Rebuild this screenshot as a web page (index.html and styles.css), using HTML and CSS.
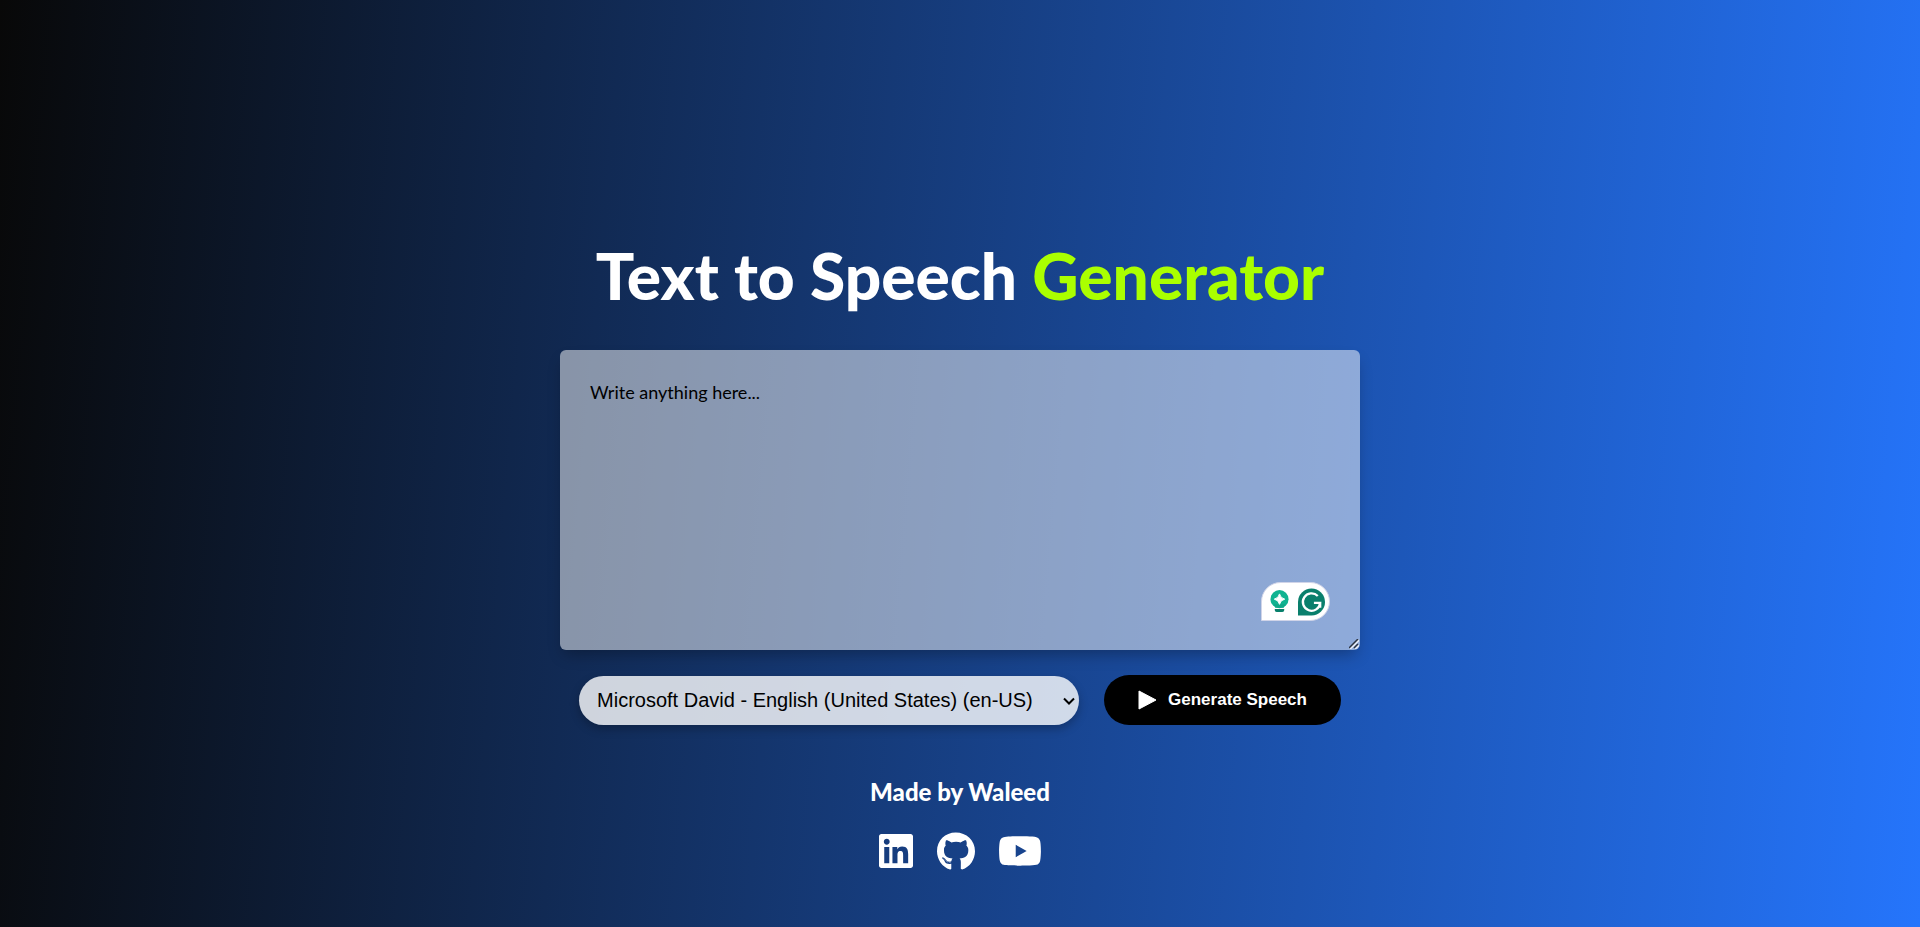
FILE: index.html
```html
<!DOCTYPE html>
<html lang="en">
<head>
<meta charset="utf-8">
<meta name="viewport" content="width=device-width, initial-scale=1">
<title>Text to Speech Generator</title>
<link rel="stylesheet" href="styles.css">
</head>
<body>
<main class="hero">
  <h1 class="title">Text to Speech <span class="accent">Generator</span></h1>
  <div class="editor">
    <textarea class="editor-text" aria-label="Text to speak" placeholder="Write anything here..."></textarea>
    <svg class="grip" viewBox="0 0 10 10" aria-hidden="true">
      <path d="M1 10l9-9M6 10l4-4" stroke="#e4ebf7" stroke-width="2"/>
      <path d="M0 9l9-9M5 9l4-4" stroke="#2c3442" stroke-width="1.500"/>
    </svg>
    <div class="assistant" aria-hidden="true">
      <svg class="bulb" viewBox="0 0 20 24">
        <circle cx="10" cy="9.500" r="9.500" fill="#0fb391"/>
        <path d="M4 15h12l-1.500 3.500H5.500z" fill="#0fa888"/>
        <path d="M10 4Q11 8.500 15.500 9.500 11 10.500 10 15 9 10.500 4.500 9.500 9 8.500 10 4z" fill="#fff" stroke="#fff" stroke-linejoin="round"/>
        <path d="M5 20h10v1q0 2-2 2H7q-2 0-2-2z" fill="#08806b"/>
      </svg>
      <svg class="badge-g" viewBox="0 0 28 28">
        <path d="M0 28V14A14 14 0 1 1 14 28z" fill="#0a7f6c"/>
        <path d="M20.500 7.800A9 9 0 1 0 23 15h-6.500M23 15v5" fill="none" stroke="#fff" stroke-width="2.400"/>
      </svg>
    </div>
  </div>
  <div class="controls">
    <div class="voice-field">
      <select class="voice" aria-label="Voice">
        <option>Microsoft David - English (United States) (en-US)</option>
      </select>
      <svg class="chevron" viewBox="0 0 12 8" aria-hidden="true"><path d="M1 1.500l5 5 5-5" fill="none" stroke="#000" stroke-width="2"/></svg>
    </div>
    <button class="generate" type="button">
      <svg class="play" viewBox="0 0 18 20" aria-hidden="true"><path d="M1 1l17 9L1 19z" fill="#fff" stroke="#fff" stroke-linejoin="round"/></svg>
      Generate Speech
    </button>
  </div>
  <footer class="credits">
    <h2 class="author">Made by Waleed</h2>
    <div class="social">
      <a href="#linkedin" aria-label="LinkedIn"><svg class="icon linkedin" viewBox="0 32 448 448"><path d="M416 32H31.900C14.300 32 0 46.500 0 64.300v383.400C0 465.500 14.300 480 31.900 480H416c17.600 0 32-14.500 32-32.300V64.300c0-17.800-14.400-32.300-32-32.300zM135.400 416H69V202.200h66.500V416zm-33.200-243c-21.300 0-38.500-17.300-38.500-38.500S80.900 96 102.200 96c21.200 0 38.500 17.300 38.500 38.500 0 21.300-17.200 38.500-38.500 38.500zm282.100 243h-66.400V312c0-24.800-.5-56.700-34.500-56.700-34.600 0-39.900 27-39.900 54.900V416h-66.400V202.200h63.700v29.200h.9c8.900-16.800 30.600-34.500 62.900-34.500 67.200 0 79.700 44.300 79.700 101.900V416z"/></svg></a>
      <a href="#github" aria-label="GitHub"><svg class="icon github" viewBox="0 8 496 484"><path d="M165.900 397.400c0 2-2.300 3.600-5.200 3.600-3.300.3-5.600-1.300-5.600-3.600 0-2 2.300-3.600 5.200-3.600 3-.3 5.600 1.300 5.600 3.600zm-31.100-4.500c-.7 2 1.300 4.300 4.300 4.900 2.600 1 5.600 0 6.200-2s-1.300-4.300-4.300-5.200c-2.600-.7-5.500.3-6.200 2.300zm44.200-1.700c-2.900.7-4.900 2.600-4.600 4.900.3 2 2.900 3.300 5.900 2.600 2.900-.7 4.900-2.600 4.600-4.600-.3-1.900-3-3.200-5.900-2.900zM244.800 8C106.100 8 0 113.300 0 252c0 110.900 69.800 205.800 169.500 239.200 12.800 2.300 17.300-5.600 17.300-12.100 0-6.200-.3-40.400-.3-61.400 0 0-70 15-84.700-29.800 0 0-11.400-29.100-27.800-36.600 0 0-22.900-15.700 1.600-15.400 0 0 24.900 2 38.600 25.800 21.900 38.600 58.600 27.500 72.900 20.900 2.300-16 8.800-27.100 16-33.700-55.900-6.200-112.300-14.300-112.300-110.500 0-27.500 7.600-41.300 23.600-58.900-2.600-6.500-11.100-33.300 2.600-67.900 20.900-6.500 69 27 69 27 20-5.600 41.500-8.500 62.800-8.500s42.800 2.900 62.800 8.500c0 0 48.100-33.600 69-27 13.700 34.700 5.200 61.400 2.600 67.900 16 17.700 25.800 31.500 25.800 58.900 0 96.500-58.900 104.200-114.800 110.500 9.200 7.900 17 22.900 17 46.400 0 33.700-.3 75.400-.3 83.600 0 6.500 4.600 14.400 17.300 12.100C428.200 457.800 496 362.900 496 252 496 113.300 383.500 8 244.800 8zM97.200 352.900c-1.300 1-1 3.300.7 5.200 1.600 1.600 3.900 2.300 5.200 1 1.300-1 1-3.300-.7-5.200-1.600-1.600-3.900-2.300-5.200-1zm-10.800-8.100c-.7 1.300.3 2.900 2.300 3.900 1.600 1 3.600.7 4.300-.7.7-1.300-.3-2.900-2.300-3.900-2-.6-3.600-.3-4.300.7zm32.400 35.600c-1.600 1.300-1 4.300 1.300 6.200 2.300 2.300 5.200 2.600 6.500 1 1.300-1.300.7-4.300-1.300-6.200-2.200-2.300-5.200-2.600-6.500-1zm-11.400-14.700c-1.600 1-1.600 3.600 0 5.900 1.600 2.300 4.300 3.300 5.600 2.300 1.600-1.300 1.600-3.900 0-6.200-1.400-2.300-4-3.300-5.600-2z"/></svg></a>
      <a href="#youtube" aria-label="YouTube"><svg class="icon youtube" viewBox="14 64 548 385"><path d="M549.700 124.100c-6.300-23.700-24.800-42.300-48.300-48.600C458.800 64 288 64 288 64S117.200 64 74.600 75.500c-23.500 6.300-42 24.900-48.300 48.600-11.400 42.900-11.400 132.300-11.400 132.300s0 89.400 11.400 132.300c6.300 23.700 24.800 41.500 48.300 47.800C117.200 448 288 448 288 448s170.800 0 213.400-11.500c23.500-6.300 42-24.200 48.300-47.800 11.400-42.900 11.400-132.300 11.400-132.300s0-89.400-11.400-132.300zm-317.500 213.500V175.200l142.700 81.200-142.700 81.200z"/></svg></a>
    </div>
  </footer>
</main>
</body>
</html>
```
FILE: styles.css
```css
* {
  box-sizing: border-box;
  margin: 0;
}

body {
  min-height: 100vh;
  background: linear-gradient(95deg, #080808, #2575fc);
  color: #fff;
  font-family: "Gill Sans MT", Lato, sans-serif;
}

.hero {
  display: flex;
  flex-direction: column;
  align-items: center;
  padding: 236px 20px 40px;
}

.title {
  margin-bottom: 34px;
  font-size: 64px;
  font-weight: 900;
  line-height: 80px;
  text-align: center;
}

.accent {
  color: #af0;
}

.editor {
  position: relative;
  width: 100%;
  max-width: 800px;
}

.editor-text {
  display: block;
  width: 100%;
  height: 300px;
  padding: 30px;
  border: 0;
  border-radius: 6px;
  outline: 0;
  background: rgba(255, 255, 255, 0.5);
  box-shadow: 0 8px 16px -4px rgba(0, 0, 0, 0.3);
  color: #000;
  font-family: inherit;
  font-size: 18px;
  line-height: 24px;
}

.editor-text::placeholder {
  color: #000;
}

.editor-text::-webkit-resizer {
  background: transparent;
}

.grip {
  position: absolute;
  right: 1px;
  bottom: 1px;
  width: 10px;
  height: 10px;
  pointer-events: none;
}

.assistant {
  position: absolute;
  right: 30px;
  bottom: 29px;
  display: flex;
  align-items: center;
  justify-content: space-between;
  width: 69px;
  height: 39px;
  padding: 0 4px 0 8px;
  border: 1px solid #d0d4e8;
  border-radius: 20px 20px 20px 0;
  background: #fff;
}

.bulb {
  width: 19px;
  height: 23px;
}

.badge-g {
  width: 27px;
  height: 28px;
}

.controls {
  display: flex;
  flex-wrap: wrap;
  align-items: flex-end;
  justify-content: center;
  gap: 25px;
  margin-top: 25px;
}

.voice-field {
  position: relative;
  width: 500px;
  max-width: 100%;
}

.voice {
  display: block;
  width: 100%;
  height: 49px;
  padding: 0 30px 2px 18px;
  border: 0;
  border-radius: 25px;
  appearance: none;
  background: rgba(255, 255, 255, 0.8);
  box-shadow: 0 4px 10px rgba(0, 0, 0, 0.25);
  color: #000;
  font-family: "Liberation Sans", Arial, sans-serif;
  font-size: 20px;
}

.chevron {
  position: absolute;
  top: 21px;
  right: 4px;
  width: 12px;
  height: 8px;
  pointer-events: none;
}

.generate {
  display: flex;
  align-items: center;
  gap: 12px;
  height: 50px;
  padding: 0 34px;
  border: 0;
  border-radius: 25px;
  background: #000;
  color: #fff;
  font: bold 17px "Liberation Sans", Arial, sans-serif;
}

.play {
  width: 18px;
  height: 20px;
}

.credits {
  display: flex;
  flex-direction: column;
  align-items: center;
  gap: 25px;
  margin-top: 52px;
}

.author {
  font-size: 24px;
  font-weight: 900;
  line-height: 30px;
}

.social {
  display: flex;
  align-items: center;
  gap: 24px;
}

.social a {
  display: flex;
}

.icon {
  fill: #fff;
}

.linkedin {
  width: 34px;
  height: 34px;
}

.github {
  width: 38px;
  height: 38px;
}

.youtube {
  width: 42px;
  height: 30px;
}
```
